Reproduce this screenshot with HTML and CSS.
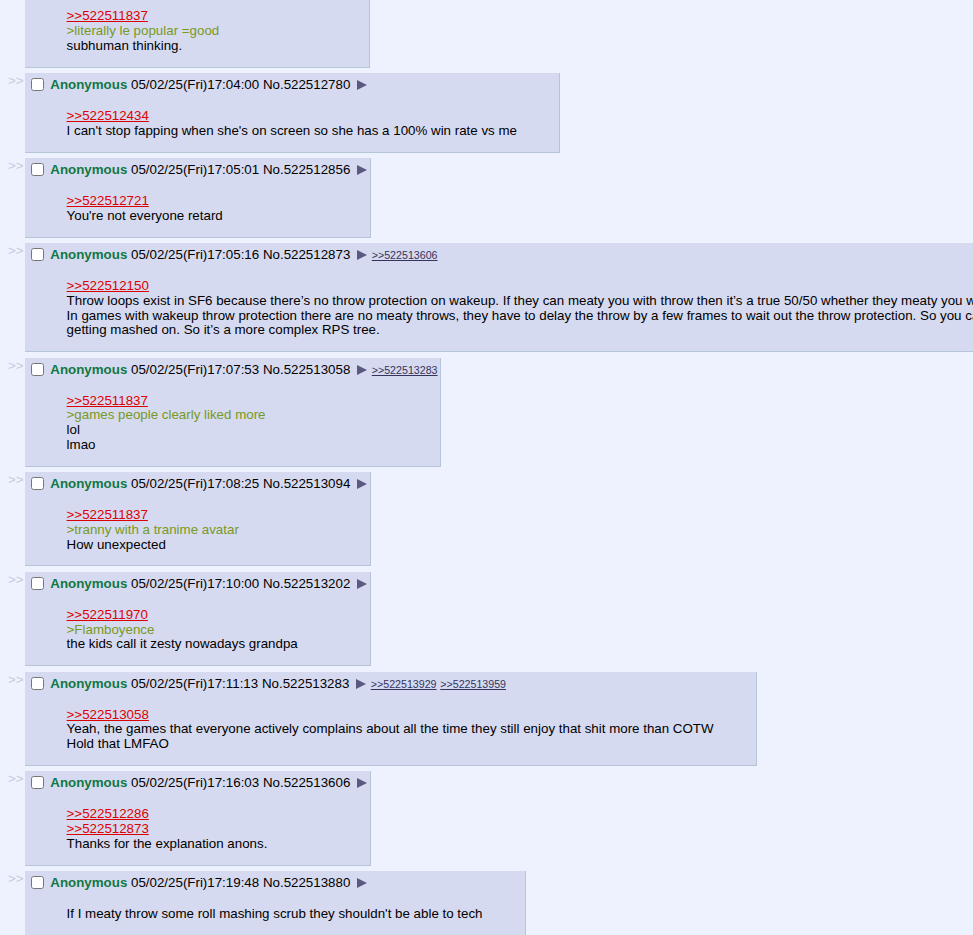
FILE: index.html
```html
<!DOCTYPE html>
<html lang="en">
<head>
    <meta charset="UTF-8">
    <meta name="viewport" content="width=device-width, initial-scale=1.0">
    <title>/v/ - Thread</title>
    <link rel="stylesheet" href="styles.css">
</head>
<body>
    <div class="thread">

        <div class="postContainer">
            <div class="sideArrows">&gt;&gt;</div>
            <div class="post">
                <div class="postInfo">
                    <input type="checkbox">
                    <span class="name">Anonymous</span>
                    <span class="dateTime">05/02/25(Fri)17:03:11</span>
                    <span class="postNum">No.522512714</span>
                    <span class="menuBtn"></span>
                </div>
                <blockquote class="postMessage">
                    <a class="quotelink">&gt;&gt;522511837</a><br>
                    <span class="quote">&gt;literally le popular =good</span><br>
                    subhuman thinking.
                </blockquote>
            </div>
        </div>

        <div class="postContainer">
            <div class="sideArrows">&gt;&gt;</div>
            <div class="post">
                <div class="postInfo">
                    <input type="checkbox">
                    <span class="name">Anonymous</span>
                    <span class="dateTime">05/02/25(Fri)17:04:00</span>
                    <span class="postNum">No.522512780</span>
                    <span class="menuBtn"></span>
                </div>
                <blockquote class="postMessage">
                    <a class="quotelink">&gt;&gt;522512434</a><br>
                    I can't stop fapping when she's on screen so she has a 100% win rate vs me
                </blockquote>
            </div>
        </div>

        <div class="postContainer">
            <div class="sideArrows">&gt;&gt;</div>
            <div class="post">
                <div class="postInfo">
                    <input type="checkbox">
                    <span class="name">Anonymous</span>
                    <span class="dateTime">05/02/25(Fri)17:05:01</span>
                    <span class="postNum">No.522512856</span>
                    <span class="menuBtn"></span>
                </div>
                <blockquote class="postMessage">
                    <a class="quotelink">&gt;&gt;522512721</a><br>
                    You're not everyone retard
                </blockquote>
            </div>
        </div>

        <div class="postContainer">
            <div class="sideArrows">&gt;&gt;</div>
            <div class="post">
                <div class="postInfo">
                    <input type="checkbox">
                    <span class="name">Anonymous</span>
                    <span class="dateTime">05/02/25(Fri)17:05:16</span>
                    <span class="postNum">No.522512873</span>
                    <span class="menuBtn"></span>
                    <a class="backlink">&gt;&gt;522513606</a>
                </div>
                <blockquote class="postMessage wide">
                    <a class="quotelink">&gt;&gt;522512150</a><br>
                    Throw loops exist in SF6 because there’s no throw protection on wakeup. If they can meaty you with throw then it’s a true 50/50 whether they meaty you with a throw or a strike.<br>
                    In games with wakeup throw protection there are no meaty throws, they have to delay the throw by a few frames to wait out the throw protection. So you can mash tech and risk<br>
                    getting mashed on. So it’s a more complex RPS tree.
                </blockquote>
            </div>
        </div>

        <div class="postContainer">
            <div class="sideArrows">&gt;&gt;</div>
            <div class="post">
                <div class="postInfo">
                    <input type="checkbox">
                    <span class="name">Anonymous</span>
                    <span class="dateTime">05/02/25(Fri)17:07:53</span>
                    <span class="postNum">No.522513058</span>
                    <span class="menuBtn"></span>
                    <a class="backlink">&gt;&gt;522513283</a>
                </div>
                <blockquote class="postMessage">
                    <a class="quotelink">&gt;&gt;522511837</a><br>
                    <span class="quote">&gt;games people clearly liked more</span><br>
                    lol<br>
                    lmao
                </blockquote>
            </div>
        </div>

        <div class="postContainer">
            <div class="sideArrows">&gt;&gt;</div>
            <div class="post">
                <div class="postInfo">
                    <input type="checkbox">
                    <span class="name">Anonymous</span>
                    <span class="dateTime">05/02/25(Fri)17:08:25</span>
                    <span class="postNum">No.522513094</span>
                    <span class="menuBtn"></span>
                </div>
                <blockquote class="postMessage">
                    <a class="quotelink">&gt;&gt;522511837</a><br>
                    <span class="quote">&gt;tranny with a tranime avatar</span><br>
                    How unexpected
                </blockquote>
            </div>
        </div>

        <div class="postContainer">
            <div class="sideArrows">&gt;&gt;</div>
            <div class="post">
                <div class="postInfo">
                    <input type="checkbox">
                    <span class="name">Anonymous</span>
                    <span class="dateTime">05/02/25(Fri)17:10:00</span>
                    <span class="postNum">No.522513202</span>
                    <span class="menuBtn"></span>
                </div>
                <blockquote class="postMessage">
                    <a class="quotelink">&gt;&gt;522511970</a><br>
                    <span class="quote">&gt;Flamboyence</span><br>
                    the kids call it zesty nowadays grandpa
                </blockquote>
            </div>
        </div>

        <div class="postContainer">
            <div class="sideArrows">&gt;&gt;</div>
            <div class="post">
                <div class="postInfo">
                    <input type="checkbox">
                    <span class="name">Anonymous</span>
                    <span class="dateTime">05/02/25(Fri)17:11:13</span>
                    <span class="postNum">No.522513283</span>
                    <span class="menuBtn"></span>
                    <a class="backlink">&gt;&gt;522513929</a>
                    <a class="backlink">&gt;&gt;522513959</a>
                </div>
                <blockquote class="postMessage">
                    <a class="quotelink">&gt;&gt;522513058</a><br>
                    Yeah, the games that everyone actively complains about all the time they still enjoy that shit more than COTW<br>
                    Hold that LMFAO
                </blockquote>
            </div>
        </div>

        <div class="postContainer">
            <div class="sideArrows">&gt;&gt;</div>
            <div class="post">
                <div class="postInfo">
                    <input type="checkbox">
                    <span class="name">Anonymous</span>
                    <span class="dateTime">05/02/25(Fri)17:16:03</span>
                    <span class="postNum">No.522513606</span>
                    <span class="menuBtn"></span>
                </div>
                <blockquote class="postMessage">
                    <a class="quotelink">&gt;&gt;522512286</a><br>
                    <a class="quotelink">&gt;&gt;522512873</a><br>
                    Thanks for the explanation anons.
                </blockquote>
            </div>
        </div>

        <div class="postContainer">
            <div class="sideArrows">&gt;&gt;</div>
            <div class="post">
                <div class="postInfo">
                    <input type="checkbox">
                    <span class="name">Anonymous</span>
                    <span class="dateTime">05/02/25(Fri)17:19:48</span>
                    <span class="postNum">No.522513880</span>
                    <span class="menuBtn"></span>
                </div>
                <blockquote class="postMessage">
                    If I meaty throw some roll mashing scrub they shouldn't be able to tech<br>
                    <br>
                </blockquote>
            </div>
        </div>

    </div>
</body>
</html>
```

FILE: styles.css
```css
html{
    overflow: hidden;
}

body{
    margin: 0;
    padding: 8px;
    background: #eef2ff;
    color: #000;
    font-family: "Liberation Sans", Arial, sans-serif;
    font-size: 10pt;
}

.thread{
    display: flex;
    flex-direction: column;
    align-items: flex-start;
    gap: 5.5px;
    width: max-content;
    margin-top: -34.75px;
}

.postContainer{
    display: flex;
    align-items: flex-start;
}

.sideArrows{
    color: #c3cbe0;
    margin-right: 1px;
    line-height: 15px;
}

.post{
    flex-shrink: 0;
    background: #d6daf0;
    border: 1px solid #b7c5d9;
    border-left: none;
    border-top: none;
    padding: 2px;
    white-space: nowrap;
}

.postInfo{
    height: 19px;
    line-height: 19px;
}

.postInfo input{
    width: 13px;
    height: 13px;
    margin: 3px 3px 3px 4px;
    vertical-align: top;
}

.name{
    color: #117743;
    font-weight: bold;
}

.menuBtn{
    display: inline-block;
    width: 0;
    height: 0;
    margin-left: 3px;
    margin-right: 1px;
    border-left: 10px solid #5a5a80;
    border-top: 5px solid transparent;
    border-bottom: 5px solid transparent;
    vertical-align: -1px;
}

.backlink{
    color: #34345c;
    font-size: 0.8em;
    text-decoration: underline;
}

.postMessage{
    margin: 15px 40px 11px;
    line-height: 14.75px;
    white-space: normal;
}

.postMessage.wide{
    white-space: nowrap;
}

.quotelink{
    color: #dd0000;
    text-decoration: underline;
}

.quote{
    color: #789922;
}
```
